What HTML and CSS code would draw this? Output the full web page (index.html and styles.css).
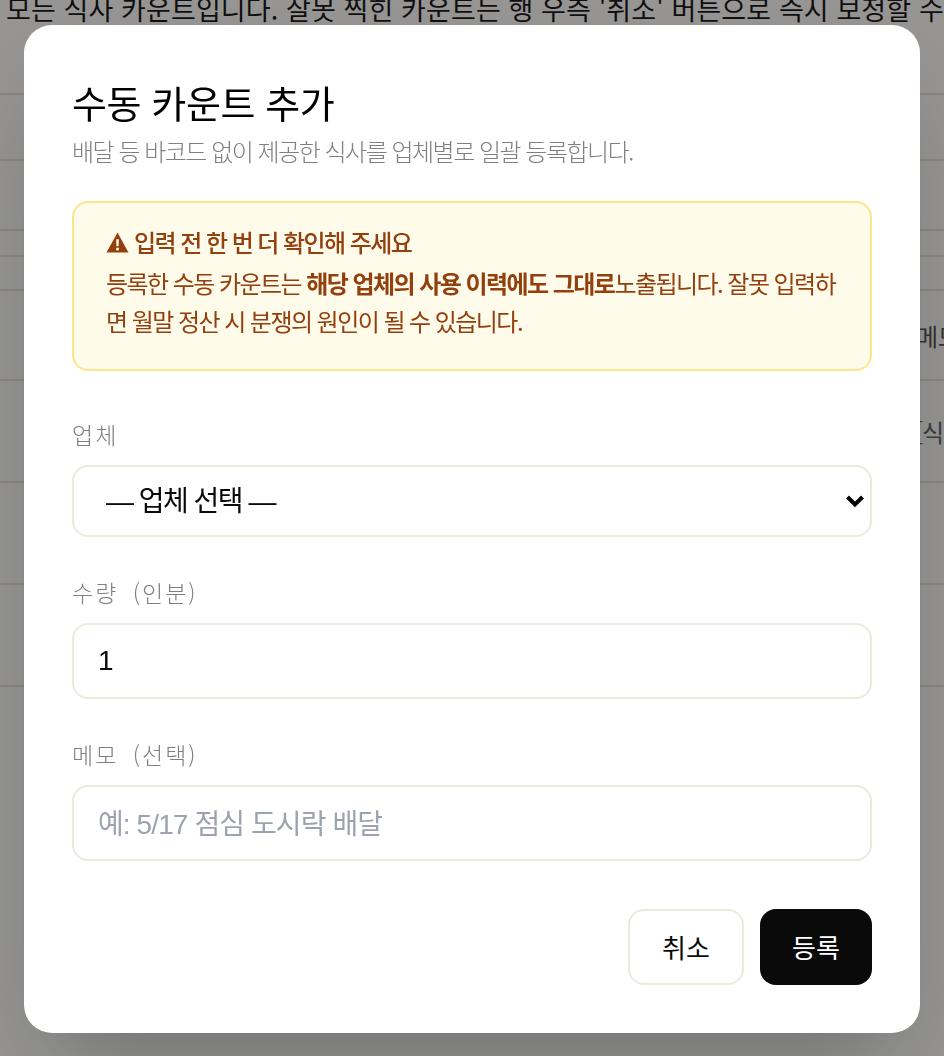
FILE: index.html
```html
<!DOCTYPE html>
<html lang="ko">
<head>
    <meta charset="UTF-8">
    <meta name="viewport" content="width=device-width, initial-scale=1.0">
    <title>수동 카운트 추가</title>
    <link rel="stylesheet" href="styles.css">
</head>
<body>
    <!-- Page behind the modal -->
    <div class="page">
        <p class="page-note">모든 식사 카운트입니다. 잘못 찍힌 카운트는 행 우측 '취소' 버튼으로 즉시 보정할 수 있습니다.</p>
        <div class="page-row row-a"></div>
        <div class="page-row row-b"></div>
        <div class="page-row row-c"></div>
        <div class="page-row row-d"></div>
        <div class="page-row row-e"></div>
        <div class="page-row row-f"><span class="page-cell">메모</span></div>
        <div class="page-row row-g"><span class="page-cell muted">[식사</span></div>
        <div class="page-row row-g"></div>
        <div class="page-row row-g"></div>
    </div>

    <div class="overlay">
        <form class="modal">
            <h1>수동 카운트 추가</h1>
            <p class="subtitle">배달 등 바코드 없이 제공한 식사를 업체별로 일괄 등록합니다.</p>

            <div class="notice">
                <div class="notice-title">
                    <svg class="notice-icon" viewBox="0 0 24 22" aria-hidden="true">
                        <path fill-rule="evenodd" d="M12 .5 23.5 21.5H.5L12 .5Zm-1.4 7.2.3 7.3h2.2l.3-7.3h-2.8Zm1.4 8.6a1.6 1.6 0 1 0 0 3.2 1.6 1.6 0 0 0 0-3.2Z"/>
                    </svg>
                    입력 전 한 번 더 확인해 주세요
                </div>
                <p>등록한 수동 카운트는 <strong>해당 업체의 사용 이력에도 그대로</strong>노출됩니다. 잘못 입력하면 월말 정산 시 분쟁의 원인이 될 수 있습니다.</p>
            </div>

            <div class="form-group first">
                <label for="vendor">업체</label>
                <div class="select-wrap">
                    <select id="vendor" name="vendor">
                        <option>— 업체 선택 —</option>
                    </select>
                    <svg class="select-arrow" viewBox="0 0 20 14" aria-hidden="true">
                        <path d="M2.5 3 10 10.5 17.5 3" fill="none" stroke="#000" stroke-width="4"/>
                    </svg>
                </div>
            </div>

            <div class="form-group">
                <label for="count">수량 (인분)</label>
                <input type="text" id="count" name="count" value="1">
            </div>

            <div class="form-group">
                <label for="memo">메모 (선택)</label>
                <input type="text" id="memo" name="memo" placeholder="예: 5/17 점심 도시락 배달">
            </div>

            <div class="actions">
                <button type="button" class="btn-cancel">취소</button>
                <button type="button" class="btn-submit">등록</button>
            </div>
        </form>
    </div>
</body>
</html>
```
FILE: styles.css
```css
/* Basic Reset */
* {
    margin: 0;
    padding: 0;
    box-sizing: border-box;
    font-family: "Noto Sans CJK KR", "Noto Sans", sans-serif;
}

html, body {
    height: 100%;
    overflow: hidden;
    background-color: #faf9f6;
}

/* Page behind the modal */
.page {
    height: 1056px;
    overflow: hidden;
    color: #1a1a1a;
}

.page-note {
    margin-top: -9px;
    padding-left: 6px;
    font-size: 27px;
    line-height: 36px;
    letter-spacing: 0.1px;
    white-space: nowrap;
}

.page-row {
    display: flex;
    align-items: center;
    justify-content: flex-end;
    border-bottom: 2px solid #e6e0d4;
}

.row-a { height: 68px; }
.row-b { height: 66px; }
.row-c { height: 70px; }
.row-d { height: 26px; }
.row-e { height: 34px; }
.row-f { height: 90px; }
.row-g { height: 102px; }

.page-cell {
    width: 28px;
    font-size: 24px;
    white-space: nowrap;
    color: #555;
}

.page-cell.muted {
    width: 29px;
    color: #666;
    letter-spacing: -1px;
}

/* Overlay and Modal */
.overlay {
    position: fixed;
    top: 0;
    right: 0;
    bottom: 0;
    left: 0;
    padding: 25px 24px 23px;
    background-color: rgba(0, 0, 0, 0.4);
    backdrop-filter: blur(0.5px);
}

.modal {
    height: 1008px;
    padding: 48px;
    background-color: #fff;
    border-radius: 28px;
    box-shadow: 0 50px 100px -24px rgba(0, 0, 0, 0.25);
}

.modal h1 {
    font-size: 38px;
    font-weight: 400;
    line-height: 58px;
    letter-spacing: -0.4px;
    color: #000;
}

.subtitle {
    margin-top: 2px;
    font-size: 24px;
    font-weight: 300;
    line-height: 36px;
    letter-spacing: -1.5px;
    color: #7f7f7f;
}

/* Notice Box */
.notice {
    height: 170px;
    margin-top: 32px;
    padding: 20px 32px;
    background-color: #fffbeb;
    border: 2px solid #fde68a;
    border-radius: 16px;
    font-size: 24px;
    line-height: 38px;
    letter-spacing: -1.55px;
    color: #92400e;
}

.notice-title {
    display: flex;
    align-items: center;
    gap: 5px;
    font-weight: 500;
}

.notice-icon {
    width: 23px;
    height: 21px;
    fill: #92400e;
}

.notice p {
    margin-top: 3px;
}

.notice strong {
    font-weight: 700;
}

/* Form Group */
.form-group {
    margin-top: 37px;
}

.form-group.first {
    margin-top: 45px;
}

.form-group label {
    display: block;
    margin-bottom: 13px;
    font-size: 23px;
    font-weight: 300;
    line-height: 36px;
    letter-spacing: 2px;
    word-spacing: 6px;
    color: #7f7f7f;
}

.form-group input,
.form-group select {
    display: block;
    width: 100%;
    background-color: #fff;
    border: 2px solid #ece9df;
    border-radius: 16px;
    font-size: 28px;
    color: #0a0a0a;
    outline: none;
}

.form-group input {
    height: 76px;
    padding: 0 24px;
    font-family: "Liberation Sans", "Noto Sans CJK KR", sans-serif;
}

.form-group #memo {
    padding-top: 4px;
}

.form-group input::placeholder {
    color: #9ca3af;
    letter-spacing: -0.9px;
}

.form-group select {
    height: 72px;
    padding: 0 32px;
    appearance: none;
    font-family: "Liberation Sans", "Noto Sans CJK KR", sans-serif;
    letter-spacing: -1.5px;
}

.select-wrap {
    position: relative;
}

.select-arrow {
    position: absolute;
    top: 29px;
    right: 7px;
    width: 20px;
    height: 14px;
    pointer-events: none;
}

/* Buttons */
.actions {
    display: flex;
    justify-content: flex-end;
    gap: 16px;
    margin-top: 48px;
}

.actions button {
    height: 76px;
    padding-bottom: 2px;
    border-radius: 16px;
    font-size: 26px;
    cursor: pointer;
}

.btn-cancel {
    width: 116px;
    background-color: #fff;
    border: 2px solid #ece9df;
    color: #0a0a0a;
}

.btn-submit {
    width: 112px;
    background-color: #0a0a0a;
    border: none;
    color: #fff;
}
```
